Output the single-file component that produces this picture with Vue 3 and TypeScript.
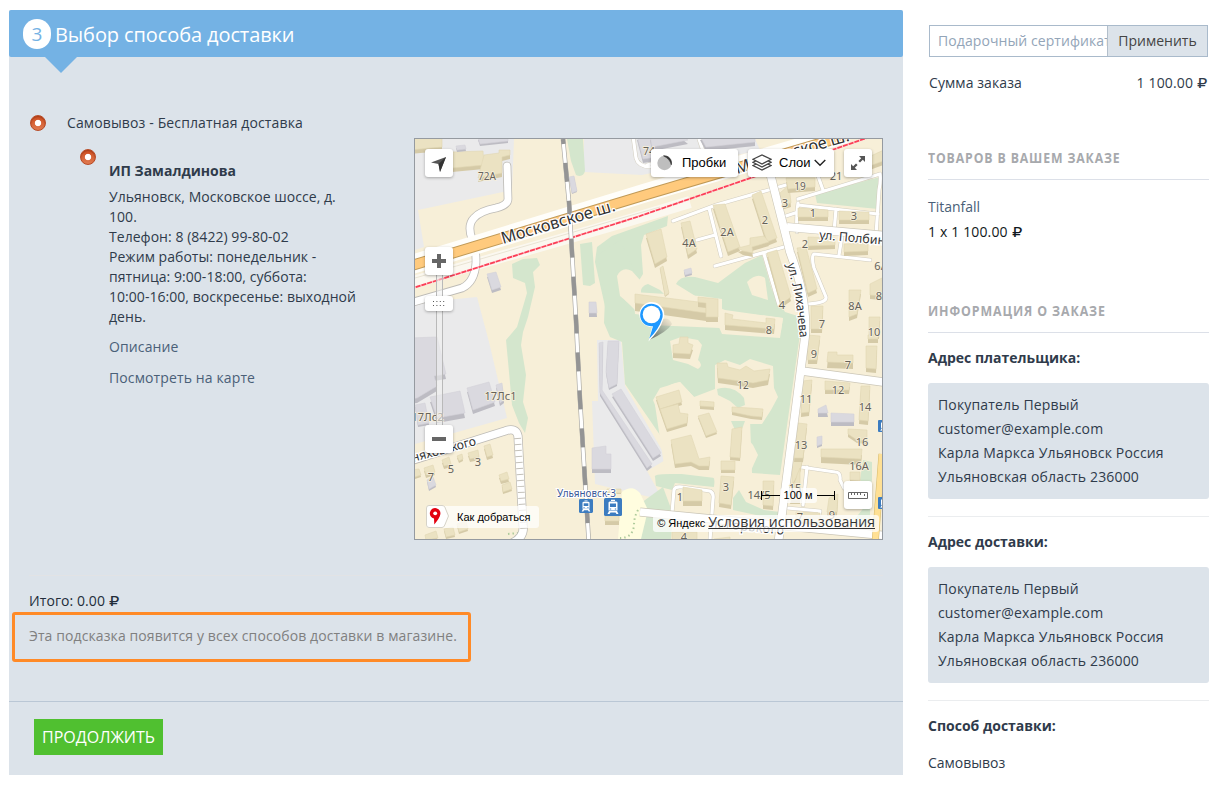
<script setup lang="ts">
interface Shape { p: string; grey?: boolean; h?: number }
interface Label { x: number; y: number; t: string; s?: number }

const addressLines = ['Покупатель Первый', 'customer@example.com', 'Карла Маркса Ульяновск Россия', 'Ульяновская область 236000']

const pickupLines = [
  'Ульяновск, Московское шоссе, д.', '100.', 'Телефон: 8 (8422) 99-80-02', 'Режим работы: понедельник -',
  'пятница: 9:00-18:00, суббота:', '10:00-16:00, воскресенье: выходной', 'день.',
]

const buildings: Shape[] = [
  { p: '410,136 442,136 442,147 410,150' },
  { p: '452,152 483,151 484,165 452,168' },
  { p: '484,155 499,153 499,150 510,150 510,155 502,157 502,173 478,178' },
  { p: '456,146 465,145 466,149 457,150', grey: true, h: 2 },
  { p: '478,138 508,136 508,141 480,144', grey: true, h: 2 },
  { p: '637,136 650,136 656,157 643,159', grey: true },
  { p: '650,136 683,136 688,140 652,147', grey: true },
  { p: '700,136 755,136 755,142 706,147', grey: true },
  { p: '569,177 574,176 577,191 572,193', grey: true, h: 1 },
  { p: '487,274 496,272 501,287 492,290', grey: true, h: 3 },
  { p: '589,302 596,302 597,313 589,313', grey: true, h: 4 },
  { p: '684,270 691,268 692,273 685,275', grey: true, h: 2 },
  { p: '410,338 437,337 446,374 434,376 437,386 417,398 410,399', grey: true, h: 5 },
  { p: '415,405 425,403 429,423 418,425', grey: true, h: 2 },
  { p: '430,397 460,391 465,413 437,418', grey: true, h: 5 },
  { p: '467,388 489,382 495,402 473,410', grey: true, h: 4 },
  { p: '496,385 502,383 504,400 500,403', grey: true, h: 3 },
  { p: '608,341 619,341 617,384 609,388 606,372', grey: true, h: 2 },
  { p: '599,343 603,342 602,390 652,464 647,468 600,393', grey: true, h: 3 },
  { p: '612,394 621,389 661,453 653,458', grey: true, h: 3 },
  { p: '592,448 606,446 606,454 611,454 611,469 592,469', grey: true, h: 4 },
  { p: '427,480 433,477 436,485 429,489', grey: true, h: 2 },
  { p: '646,234 661,229 667,257 655,264' },
  { p: '660,268 663,266 669,293 665,296', h: 1 },
  { p: '681,223 690,221 697,249 688,255' },
  { p: '713,205 725,204 740,247 728,252' },
  { p: '752,195 761,191 777,238 767,242' },
  { p: '738,248 750,245 750,238 764,236 769,242 752,247 753,253 743,251' },
  { p: '780,193 789,185 791,203 781,206' },
  { p: '786,178 815,178 815,187 788,189' },
  { p: '798,208 828,210 828,217 798,217' },
  { p: '839,211 869,212 869,220 839,220' },
  { p: '808,237 835,238 835,245 808,246' },
  { p: '844,244 868,243 868,251 844,252' },
  { p: '797,248 806,247 817,289 808,293' },
  { p: '767,253 777,250 791,297 781,304' },
  { p: '849,290 861,290 857,314 849,317' },
  { p: '870,284 882,278 883,296 870,295' },
  { p: '811,306 823,306 822,329 811,329' },
  { p: '869,317 880,317 879,335 869,335' },
  { p: '635,294 706,303 706,313 635,303', h: 8 },
  { p: '698,297 718,299 718,317 706,317 706,303 698,302', h: 5 },
  { p: '725,313 733,315 732,319 766,323 766,318 775,319 774,329 725,325', h: 5 },
  { p: '673,345 679,344 680,337 688,337 688,343 693,345 690,354 673,353', h: 5 },
  { p: '717,363 727,363 728,367 740,370 746,366 754,371 770,369 768,380 753,383 718,378', h: 5 },
  { p: '732,407 750,408 763,409 762,417 751,416 732,412', h: 3 },
  { p: '656,397 679,390 682,402 660,409', h: 3 },
  { p: '660,409 678,404 680,413 688,414 687,423 667,429', h: 3 },
  { p: '700,401 714,402 714,407 700,406', h: 3 },
  { p: '698,416 709,413 717,432 706,436', h: 2 },
  { p: '671,440 691,435 699,459 710,457 709,466 699,466 691,462 675,464', h: 4 },
  { p: '732,429 742,427 740,458 730,457', h: 3 },
  { p: '721,461 735,461 735,470 721,470', h: 3 },
  { p: '721,476 734,477 731,505 719,503', h: 4 },
  { p: '763,481 774,481 773,506 763,505', h: 4 },
  { p: '792,459 803,457 800,471 792,485', h: 2 },
  { p: '683,487 702,490 702,501 683,501', h: 5 },
  { p: '672,532 697,532 697,542 672,542' },
  { p: '807,335 820,336 817,360 808,360' },
  { p: '828,352 837,352 837,355 853,355 853,363 827,362', h: 6 },
  { p: '868,335 878,335 878,339 868,339' },
  { p: '866,346 877,346 876,369 866,368' },
  { p: '802,381 812,380 809,412 801,413' },
  { p: '825,381 850,383 849,390 825,390', h: 4 },
  { p: '861,386 870,386 868,421 859,420' },
  { p: '798,423 807,424 803,458 794,458' },
  { p: '818,409 826,405 828,413 818,413', grey: true },
  { p: '831,413 854,414 854,422 831,422', grey: true },
  { p: '817,437 822,436 822,444 817,446', grey: true, h: 2 },
  { p: '848,429 867,430 867,441 857,440 848,434', h: 3 },
  { p: '821,449 862,449 861,459 821,457', h: 6 },
  { p: '850,472 860,472 860,481 850,480' },
  { p: '797,475 800,468 800,500 790,500' },
  { p: '829,498 838,494 837,512 827,512' },
  { p: '796,512 820,513 820,522 796,522' },
  { p: '410,470 419,469 421,475 412,478', h: 2 },
  { p: '424,468 433,465 435,472 426,475', h: 3 },
  { p: '442,460 449,457 451,464 444,466', h: 3 },
  { p: '457,456 462,454 463,459 459,461', h: 2 },
  { p: '468,453 478,450 479,457 470,459', h: 3 },
  { p: '484,446 490,444 493,455 487,457', h: 3 },
  { p: '499,475 507,472 509,479 501,481', h: 3 },
  { p: '502,485 510,482 512,489 503,492', h: 2 },
  { p: '425,535 436,531 438,538 426,540' },
  { p: '444,529 453,527 455,535 446,537', h: 2 },
  { p: '457,524 466,521 468,529 459,532', h: 2 },
  { p: '607,489 621,489 621,493 607,493', h: 1 },
  { p: '605,516 619,516 619,521 605,521' },
  { p: '714,539 730,537 730,542 714,542' },
  { p: '862,160 886,149 886,160 864,168' },
]

const labels: Label[] = [
  { x: 487, y: 180, t: '72А', s: 10 }, { x: 649, y: 155, t: '74', s: 10.5 }, { x: 689, y: 247, t: '4А' },
  { x: 727, y: 236, t: '2А' }, { x: 765, y: 224, t: '2' }, { x: 785, y: 207, t: '3' }, { x: 800, y: 190, t: '19', s: 10 },
  { x: 836, y: 180, t: '21' }, { x: 813, y: 217, t: '1' }, { x: 854, y: 220, t: '3' }, { x: 805, y: 248, t: '2' },
  { x: 881, y: 270, t: '6А' }, { x: 782, y: 309, t: '4' }, { x: 822, y: 328, t: '7' }, { x: 855, y: 310, t: '8А' },
  { x: 879, y: 300, t: '8' }, { x: 874, y: 336, t: '10' }, { x: 769, y: 334, t: '8' }, { x: 743, y: 389, t: '12', s: 10 },
  { x: 814, y: 358, t: '9' }, { x: 848, y: 369, t: '7' }, { x: 806, y: 403, t: '11' }, { x: 838, y: 394, t: '12' },
  { x: 865, y: 411, t: '14' }, { x: 801, y: 449, t: '13' }, { x: 862, y: 446, t: '16' }, { x: 859, y: 470, t: '16А' },
  { x: 726, y: 491, t: '3' }, { x: 680, y: 501, t: '1' }, { x: 759, y: 499, t: '14/5' }, { x: 795, y: 492, t: '15' },
  { x: 800, y: 521, t: '7' }, { x: 832, y: 519, t: '9' }, { x: 684, y: 541, t: '4' }, { x: 500.5, y: 400, t: '17Лс1', s: 11 },
  { x: 427.5, y: 421, t: '17Лс2', s: 11 }, { x: 478, y: 466, t: '3' }, { x: 451, y: 473, t: '5' }, { x: 431, y: 481, t: '7' },
]

const minorRoads = [
  'M673,221 L716,205 L800,181 M709,208 L721,256 M697,240 L715,235 M715,266 L784,247 M764,254 L779,305',
  'M699,139 L703,151 M647,165 L725,145 Q735,140 742,139 L750,144',
  'M633,136 L636,158 Q638,166 650,167',
  'M798,199 L880,174 Q881,180 879,190 L876,235 M798,203 Q796,215 797,232 M798,205 L878,214 M783,217 L798,212 M818,176 L823,190 M836,209 L834,232 M842,236 L839,255',
  'M870,260 L814,254 Q811,256 814,268 L826,297 Q827,303 808,304',
  'M794,466 L835,472 Q841,472 840,480 L844,488 M807,467 L803,505 M787,508 L820,511 L817,524',
  'M672,513 L674,490 Q675,486 682,487 L710,491 Q714,493 713,499 L710,540',
]
</script>

<template>
  <div class="page">
    <main class="checkout">
      <header class="step"><span class="num">3</span><h1>Выбор способа доставки</h1></header>

      <section class="delivery">
        <div class="methods">
          <div class="method"><span class="radio"></span><span>Самовывоз - Бесплатная доставка</span></div>
          <div class="point">
            <span class="radio"></span>
            <div class="info">
              <strong>ИП Замалдинова</strong>
              <p><span v-for="l in pickupLines" :key="l">{{ l }}</span></p>
              <a>Описание</a>
              <a>Посмотреть на карте</a>
            </div>
          </div>
        </div>

        <div class="map">
          <svg class="canvas" viewBox="415 139 467 400" width="467" height="400">
            <rect x="415" y="139" width="467" height="400" fill="#f7efd8" />
            <g fill="#eaeaeb">
              <path d="M415,139H514L512,190L418,210L424,247L415,250Z" />
              <path d="M415,303L477,297L489,342L507,418L415,444Z" />
              <path d="M584,139H755L760,150L700,163L642,175L584,172Z" />
              <path d="M597,340H621L625,386L667,459L647,471L663,500L595,484L592,401H598Z" />
            </g>
            <g fill="#d4e6cd">
              <path d="M567,139H583L585,171Q583,178 576,175L571,161Z" />
              <path d="M512,264L523,259L537,258L540,265L533,272L535,287L528,317L523,332L521,345L526,375L523,402L528,418L525,433L519,423L512,405L509,372L506,340L517,327L522,310L527,293L525,283L513,278Z" />
              <path d="M580,244L592,242L595,283L590,286L583,285Z" />
              <path d="M597,247L612,236L668,216L667,226L644,235L641,245L643,274L638,282L631,278L622,300L614,325L611,333L595,262Z" />
              <path d="M598,255L620,240L634,270L617,273L625,300L650,325L720,328L800,334L780,475L752,473L750,420L733,395L714,397L694,397L680,382L660,388L653,400L665,430L660,435L625,384L622,342L610,337L604,323L605,298Z" />
              <path d="M676,284Q680,275 695,277L718,283L745,263L762,255L772,290L785,312L804,318L799,340L780,337L783,318L725,310L705,302Z" />
              <path d="M641,293Q640,286 648,284L660,290L668,298L660,299Z" />
              <path d="M655,477Q653,474 670,474H710Q716,477 714,487L675,483L672,490L656,486Z" />
              <path d="M733,498L739,490L746,502L764,510L780,512L779,520L733,510Z" />
              <path d="M815,194L880,177L878,209L817,203Z" />
              <path d="M641,503L663,487L673,514L671,539H640Z" />
              <path d="M863,460L872,462V480L868,494L860,480Z M862,510L870,499V525H850Z" />
            </g>
            <g fill="#f7efd8">
              <path d="M617,276Q622,266 632,271L640,280L646,284L636,293L633,307L620,296Z" />
              <path d="M633,292L700,296L722,299V311L783,318L780,338L722,334L718,325L635,314Z" />
              <path d="M670,341L681,337L698,340L702,345L698,360Q704,365 698,369L688,364L673,360Z" />
              <path d="M715,365L725,360L740,365L750,359L773,366L774,388L778,397L771,410L762,424H732L742,432L753,445L758,455L749,475L715,478L665,472L655,405Q660,385 680,382L694,397L715,389Z" />
              <path d="M747,282Q757,272 765,278L768,300L752,295Z" />
            </g>
            <path d="M717,389Q733,384 744,398L745,405L738,408L730,401L718,395Z M731,421L745,421L742,429L735,430Z" fill="#d4e6cd" />
            <path d="M622,492Q632,484 640,493L648,510L641,539H618Z" fill="#fffddf" />
            <path d="M638,510Q634,517 634,525Q633,538 620,538M508,534L518,533" fill="none" stroke="#aecb9b" stroke-width="2" stroke-dasharray="1.5 3" />

            <g fill="none" stroke-linecap="round" stroke-linejoin="round">
              <path v-for="r in minorRoads" :key="r" :d="r" stroke="#d2cdbf" stroke-width="4.2" />
              <path v-for="r in minorRoads" :key="r + 'w'" :d="r" stroke="#fff" stroke-width="3.2" />
            </g>
            <path d="M410,283L630,220L690,202" fill="none" stroke="#fbf8f0" stroke-width="12" />
            <path d="M415,278L660,207" stroke="#e9e4d4" />
            <g v-for="b in buildings" :key="b.p">
              <g :transform="`translate(0 ${b.h ?? 4})`"><polygon :points="b.p" :fill="b.grey ? '#bdbcc3' : '#d5caa7'" /></g>
              <polygon :points="b.p" :fill="b.grey ? '#dad9df' : '#ebe2c2'" :stroke="b.grey ? '#d3d2d8' : '#e0d6b4'" stroke-width=".6" />
            </g>

            <g fill="none" stroke-linejoin="round">
              <path d="M507,166L508,199Q508,205 496,208Q480,211 474,218Q467,225 472,239Q476,246 476,262Q475,282 462,288L410,303" stroke="#bdbbb6" stroke-width="8.6" stroke-linecap="round" />
              <path d="M507,166L508,199Q508,205 496,208Q480,211 474,218Q467,225 472,239Q476,246 476,262Q475,282 462,288L410,303" stroke="#fff" stroke-width="7" stroke-linecap="round" />
              <path d="M410,461L505,431Q516,427 518,436L523,525Q525,537 512,543" stroke="#bdbbb6" stroke-width="9" />
              <path d="M410,461L505,431Q516,427 518,436L523,525Q525,537 512,543" stroke="#fff" stroke-width="7.5" />
              <path d="M517.5,438L524,532" stroke="#c4c1b9" stroke-width="7" stroke-dasharray="1 5" />
              <path d="M640,512L890,536" stroke="#cbc6b7" stroke-width="9" />
              <path d="M640,512L890,536" stroke="#fff" stroke-width="7.5" />
              <path d="M882,454L875,545" stroke="#d4b96b" stroke-width="7" />
              <path d="M882,454L875,545" stroke="#ffe094" stroke-width="6" />
              <path d="M768,165L790,252Q808,300 805,337L778,545M787,227L890,236M802,371L890,383" stroke="#cbc6b7" stroke-width="9" />
              <path d="M768,165L790,252Q808,300 805,337L778,545M787,227L890,236M802,371L890,383" stroke="#fff" stroke-width="7.8" />
              <path d="M410,265L645,193L845,134" stroke="#fffefa" stroke-width="19" />
              <path d="M410,266L645,195L845,136" stroke="#c09a57" stroke-width="11" />
              <path d="M410,266L645,195L845,136" stroke="#ffca7d" stroke-width="9" />
              <path d="M410,289L640,216L890,130" stroke="#ffd0d4" stroke-width="2.2" />
              <path d="M410,289L640,216L890,130" stroke="#fb3f56" stroke-width="1.7" stroke-dasharray="5 1" />
              <path d="M563,139L569,202L576,320L580,400L589,545" stroke="#aaa9a5" stroke-width="4.6" />
              <path d="M563,139L569,202L576,320L580,400L589,545" stroke="#fff" stroke-width="3.3" />
              <path d="M563,139L569,202L576,320L580,400L589,545" stroke="#949494" stroke-width="4.2" stroke-dasharray="19 19" stroke-dashoffset="14" />
            </g>

            <g class="numbers">
              <text v-for="(l, i) in labels" :key="i" :x="l.x" :y="l.y" :font-size="l.s ?? 11" text-anchor="middle">{{ l.t }}</text>
            </g>
            <g class="streets">
              <text transform="translate(503 244) rotate(-16.5)" font-size="16.5" textLength="118">Московское ш.</text>
              <text transform="translate(737 174) rotate(-16.5)" font-size="16.5" textLength="118">Московское ш.</text>
              <text transform="translate(819 239) rotate(5)" font-size="12.5" textLength="73">ул. Полбина</text>
              <text transform="translate(787 264) rotate(76)" font-size="12.5" textLength="29">ул. Л</text>
              <text transform="translate(795 292) rotate(84)" font-size="12.5" textLength="46" lengthAdjust="spacingAndGlyphs">ихачева</text>
              <text transform="translate(413 462) rotate(-15)" font-size="12.5" textLength="66" lengthAdjust="spacingAndGlyphs">няховского</text>
              <text transform="translate(710 527) rotate(6)" font-size="12.5" textLength="74">л. Горького</text>
            </g>
            <text class="station" x="557" y="497" font-size="10" textLength="59">Ульяновск-3</text>
            <g v-for="s in [{ x: 579, y: 499, k: 14 }, { x: 604, y: 498, k: 18 }, { x: 878, y: 420, k: 12 }, { x: 878, y: 497, k: 12 }]" :key="s.x + '-' + s.y" :transform="`translate(${s.x} ${s.y}) scale(${s.k / 18})`">
              <rect width="18" height="18" rx="1.5" fill="#3c7cc0" />
              <path d="M4.5,4.5Q5,3.5 6,3.5H12Q13,3.5 13.5,4.5V12.5H4.5ZM7,1.8H11V3H7ZM5,13L3.5,16H5.5L6.5,14.5H11.5L12.5,16H14.5L13,13Z" fill="#fff" />
              <path d="M6,5.5H12V9H6Z" fill="#3c7cc0" />
              <path d="M5.8,11H7.2M10.8,11H12.2" stroke="#3c7cc0" stroke-width="1.2" />
            </g>

            <defs><linearGradient id="shade" x1="0" y1="1" x2="1" y2="0"><stop offset="0" stop-color="#333" stop-opacity=".75" /><stop offset="1" stop-color="#555" stop-opacity="0" /></linearGradient></defs>
            <path d="M649,340L659,321Q668,315 672,324Q667,332 649,340Z" fill="url(#shade)" />
            <path d="M648.5,341.5L652,327A12.5,12.5 0 1 1 663,320Q660,330 648.5,341.5Z" fill="#fff" />
            <path d="M649.3,338.5L653,326.2A11.3,11.3 0 1 1 662,319Q659,329 649.3,338.5Z" fill="#1e98ff" />
            <circle cx="651.5" cy="314.5" r="8.8" fill="#fff" />
          </svg>

          <span class="track"></span>
          <button class="ctl locate"><svg viewBox="0 0 28 28"><path d="M21,8L15,23L13.5,15L6,13.5Z" fill="#555" /><path d="M21,8L15,23L13.5,15Z" fill="#333" /></svg></button>
          <button class="ctl traffic"><svg width="16" height="16" viewBox="0 0 16 16"><circle cx="7.5" cy="8" r="7.2" fill="#bebebe" /><path d="M6.5,.8A7.2,7.2 0 0 1 14.3,9.8Q13,4 6.5,.8Z" fill="#333" stroke="#333" stroke-width=".6" /></svg>Пробки</button>
          <button class="ctl layers"><svg width="20" height="18" viewBox="0 0 20 18"><g fill="#fff" stroke="#444" stroke-width="1.2"><path d="M1,11.5L10,7.5L19,11.5L10,16Z" /><path d="M1,8.3L10,4L19,8.3L10,13Z" /><path d="M1,5.3L10,1L19,5.3L10,10Z" /></g></svg>Слои<svg class="chev" width="12" height="8" viewBox="0 0 12 8"><path d="M.7,1L6,6.3L11.3,1" fill="none" stroke="#222" stroke-width="1.4" /></svg></button>
          <button class="ctl full"><svg viewBox="0 0 28 28"><path d="M21,7V13L18.8,10.8L16,13.6L14.4,12L17.2,9.2L15,7ZM7,21V15L9.2,17.2L12,14.4L13.6,16L10.8,18.8L13,21Z" fill="#555" /></svg></button>
          <button class="ctl plus"><svg viewBox="0 0 28 28"><path d="M12,7H16V12H21V16H16V21H12V16H7V12H12Z" fill="#666" /></svg></button>
          <button class="ctl handle"><svg width="12" height="5" viewBox="0 0 12 5"><path d="M0,.5H12M0,4.5H12" stroke="#555" stroke-dasharray="1 2.4" /></svg></button>
          <button class="ctl minus"><svg viewBox="0 0 28 28"><path d="M7,12H21V16H7Z" fill="#666" /></svg></button>
          <div class="route"><svg width="24" height="24" viewBox="0 0 24 24"><path d="M3,.5H16Q18,.5 18.8,2L22.5,11L18.8,20Q18,22.5 16,22.5H3Q.5,22.5 .5,20V3Q.5,.5 3,.5Z" fill="#fff" stroke="#d6d3c8" /><path d="M8.3,19.5L8,13.5A5.3,5.3 0 1 1 14.3,9.5Q14,12.5 8.3,19.5Z" fill="#e3000f" /><circle cx="9.2" cy="8.3" r="1.9" fill="#fff" /></svg>Как добраться</div>
          <div class="scale"><i></i><span>100 м</span><i class="end"></i></div>
          <button class="ctl ruler"><svg viewBox="0 0 28 28"><path d="M4.5,11.5H23.5V17.5H4.5ZM7.5,11.5V14M10.5,11.5V14M13.5,11.5V14M16.5,11.5V14M20.5,13V15" fill="none" stroke="#666" /></svg></button>
          <div class="terms">© Яндекс <a>Условия использования</a></div>
        </div>
      </section>

      <section class="summary">
        <p class="total">Итого: 0.00 <b class="rub">₽</b></p>
        <p class="hint">Эта подсказка появится у всех способов доставки в магазине.</p>
      </section>
      <footer><button>ПРОДОЛЖИТЬ</button></footer>
    </main>

    <aside>
      <div class="coupon"><span class="field">Подарочный сертификат</span><button>Применить</button></div>
      <div class="sum"><span>Сумма заказа</span><span class="price">1 100.00 <b class="rub">₽</b></span></div>
      <h2 class="first"><span class="h-goods">ТОВАРОВ В ВАШЕМ ЗАКАЗЕ</span></h2>
      <a class="product">Titanfall</a>
      <p class="qty">1 x 1 100.00 <b class="rub">₽</b></p>
      <h2 class="second"><span class="h-info">ИНФОРМАЦИЯ О ЗАКАЗЕ</span></h2>
      <h3>Адрес плательщика:</h3>
      <div class="card"><span v-for="l in addressLines" :key="l">{{ l }}</span></div>
      <h3 class="ruled">Адрес доставки:</h3>
      <div class="card"><span v-for="l in addressLines" :key="l">{{ l }}</span></div>
      <h3 class="ruled">Способ доставки:</h3>
      <p class="ship">Самовывоз</p>
    </aside>
  </div>
</template>

<style>
body { margin: 0; background: #fff; }
</style>

<style scoped>
* { box-sizing: border-box; margin: 0; padding: 0; }
.page { display: flex; gap: 25px; width: 1220px; height: 790px; padding: 10px 11px 0 9px; overflow: hidden; font: 14px/20px "Open Sans", "Noto Sans", sans-serif; color: #2f3b4b; }
button { font: inherit; border: 0; }
.rub { display: inline-block; font: 13.5px/14px "DejaVu Sans", sans-serif; letter-spacing: 0; transform: scaleX(1.2); transform-origin: left; margin-right: 1.5px; }
.checkout { width: 894px; height: 765px; background: #dce3ea; border-radius: 2px 2px 0 0; }
.step { position: relative; display: flex; align-items: center; height: 47px; padding-left: 14px; background: #74b2e4; border-radius: 2px; color: #fff; }
.step::after { content: ""; position: absolute; left: 36px; top: 47px; border: 16px solid transparent; border-top-color: #74b2e4; border-bottom: 0; }
.num { width: 28px; height: 30px; border-radius: 14px; background: #fff; color: #74b2e4; font-size: 19px; line-height: 31px; text-align: center; }
h1 { margin: 2px 0 0 4px; font-size: 20px; font-weight: 400; line-height: 28px; letter-spacing: -.1px; white-space: nowrap; }
.delivery { display: flex; height: 519px; margin: 0 20px; border-bottom: 1px solid #e2e3e5; }
.methods { width: 385px; padding: 56px 0 0 1px; }
.method { display: flex; align-items: center; gap: 21px; height: 20px; letter-spacing: .13px; }
.radio { flex: none; width: 16px; height: 16px; border-radius: 50%; border: 1px solid #b84a25; background: radial-gradient(circle, #fff 0 2.8px, transparent 3.6px), linear-gradient(#cc4b1d, #e07b51); box-shadow: inset 0 1px 1px #a33f1c; }
.point { display: flex; gap: 13px; padding: 16px 0 0 50px; }
.info { display: flex; flex-direction: column; padding-top: 12px; white-space: nowrap; }
.info p { display: flex; flex-direction: column; margin: 6px 0 10px; letter-spacing: .04px; }
.info a { color: #4a6078; margin-bottom: 11px; letter-spacing: .12px; }
.map { position: relative; width: 469px; height: 402px; margin-top: 81px; border: 1px solid #959aa0; overflow: hidden; }
.canvas { display: block; }
.numbers { font-family: "Noto Sans", sans-serif; fill: #65625a; stroke: #f7f0dc; stroke-width: 1.6px; paint-order: stroke; }
.streets { font-family: "Noto Sans", sans-serif; fill: #333; stroke: #fff; stroke-width: 2.4px; paint-order: stroke; }
.station { font-family: "Noto Sans", sans-serif; fill: #3a5797; stroke: #fff; stroke-width: 2px; paint-order: stroke; }
.ctl { position: absolute; display: flex; align-items: center; height: 28px; background: #fff; border-radius: 3px; box-shadow: 0 1px 3px rgba(0, 0, 0, .3); font: 13px/28px "Liberation Sans", Arial, sans-serif; color: #000; white-space: nowrap; }
.locate { left: 10px; top: 10px; width: 28px; }
.traffic { left: 236px; top: 10px; width: 87px; padding-left: 6px; gap: 9px; }
.layers { left: 333px; top: 10px; width: 86px; padding-left: 4px; gap: 7px; }
.chev { margin-left: -4px; }
.full { left: 429px; top: 10px; width: 28px; }
.plus { left: 10px; top: 108px; width: 28px; }
.handle { left: 10px; top: 157px; width: 28px; height: 15px; justify-content: center; }
.track { position: absolute; left: 21px; top: 130px; width: 7px; height: 170px; background: rgba(240, 240, 240, .55); border: solid #b9b9b9; border-width: 0 1px; }
.minus { left: 10px; top: 286px; width: 28px; }
.route { position: absolute; left: 11px; top: 367px; display: flex; align-items: center; gap: 7px; width: 113px; height: 22px; background: rgba(255, 255, 255, .72); border-radius: 3px; font: 11px/22px "Liberation Sans", Arial, sans-serif; color: #000; white-space: nowrap; }
.route svg { flex: none; }
.scale { position: absolute; left: 346px; top: 349px; display: flex; align-items: center; width: 74px; height: 15px; font: 11px/15px "Liberation Sans", Arial, sans-serif; color: #000; }
.scale i { flex: 1; height: 9px; border-left: 1px solid #000; background: linear-gradient(#000, #000) 0 4px / 100% 1px no-repeat; }
.scale .end { border-left: 0; border-right: 1px solid #000; }
.scale span { padding: 0 4px; border-radius: 3px; background: rgba(255, 255, 255, .75); }
.ruler { left: 429px; top: 342px; width: 28px; }
.terms { position: absolute; right: 3px; bottom: 7px; display: flex; gap: 3px; height: 17px; padding: 0 4px; background: rgba(255, 255, 255, .75); border-radius: 3px; font: 11px/17px "Liberation Sans", Arial, sans-serif; color: #000; white-space: nowrap; }
.terms a { font: 14px/14px "Open Sans", sans-serif; letter-spacing: .05px; color: #333; text-decoration: underline; }
.summary { height: 126px; padding: 15px 0 0 3px; border-bottom: 1px solid #bac7d5; }
.total { height: 20px; padding-left: 17px; color: #222d3a; letter-spacing: .08px; }
.hint { width: 459px; height: 50px; margin-top: 1px; padding: 11px 0 0 14px; border: 3px solid #ff8a27; border-radius: 3px; color: #808080; letter-spacing: .1px; white-space: nowrap; }
footer { padding: 17px 25px; }
footer button { display: block; width: 129px; height: 36px; background: #50c030; color: #fff; font-size: 16px; line-height: 36px; }
aside { width: 281px; padding-top: 15px; white-space: nowrap; }
.coupon { display: flex; width: 279px; height: 32px; margin-left: 1px; border: 1px solid #a9bacb; }
.field { flex: 1; min-width: 0; padding-left: 8px; line-height: 30px; overflow: hidden; color: #93a5b8; letter-spacing: .08px; }
.coupon button { width: 100px; border-left: 1px solid #b3bfcb; background: #dce3ea; color: #444; }
.sum { display: flex; justify-content: space-between; height: 20px; margin: 16px 2px 0 1px; letter-spacing: .08px; }
.price, .qty { letter-spacing: .15px; }
h2 { height: 32px; border-bottom: 1px solid #dce0e8; color: #a7a9ad; font: 700 14px/20px "Open Sans", sans-serif; letter-spacing: 1px; }
h2 span { display: inline-block; transform-origin: left; }
.h-goods { transform: scaleX(.876); }
.h-info { transform: scaleX(.885); }
.first { margin-top: 55px; }
.second { margin-top: 59px; }
.product { display: block; margin-top: 17px; color: #4a6078; }
.qty { height: 20px; margin-top: 5px; color: #111820; }
h3 { font-size: 14px; font-weight: 700; line-height: 20px; margin-top: 15px; }
.card { display: flex; flex-direction: column; height: 116px; margin-top: 15px; padding: 10px; background: #dce3ea; border-radius: 3px; line-height: 24px; letter-spacing: .16px; }
.ruled { margin-top: 17px; padding-top: 15px; border-top: 1px solid #ebedef; }
.ship { margin-top: 17px; }
</style>
